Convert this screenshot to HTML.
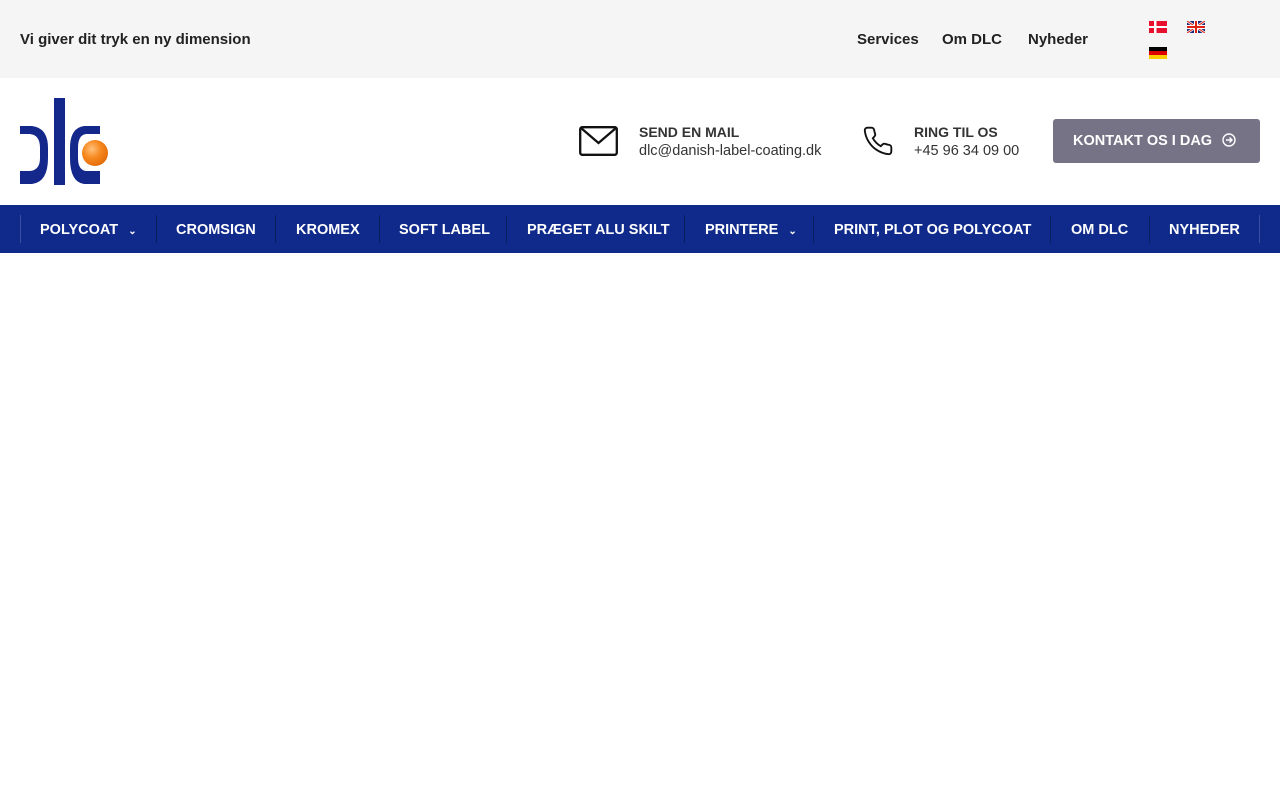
<!DOCTYPE html>
<html><head><meta charset="utf-8"><style>
*{margin:0;padding:0;box-sizing:border-box}
body{width:1280px;height:800px;background:#fff;font-family:"Liberation Sans",sans-serif;color:#222;position:relative;overflow:hidden}
.top{position:absolute;left:0;top:0;width:1280px;height:78px;background:#f5f5f5}
.top .tag{position:absolute;left:20px;top:31px;font-size:15px;font-weight:bold;color:#222}
.top .l{position:absolute;top:31px;font-size:15px;font-weight:bold;color:#222}
.lbl{position:absolute;font-size:14px;font-weight:bold;color:#333}
.val{position:absolute;font-size:14.5px;color:#333}
.btn{position:absolute;left:1053px;top:119px;width:207px;height:44px;background:#767386;border-radius:3px;color:#fff;font-weight:bold;font-size:14.5px;line-height:44px;padding-left:20px}
.nav{position:absolute;top:205px;left:0;width:1280px;height:48px;background:#0f2a8a}
.nav span{position:absolute;top:1px;line-height:48px;color:#fff;font-weight:bold;font-size:14.5px}
.nav i{position:absolute;top:10px;width:1px;height:28px;background:#0a1d5c}
</style></head><body>
<div class="top">
<div class="tag">Vi giver dit tryk en ny dimension</div>
<div class="l" style="left:857px">Services</div>
<div class="l" style="left:942px">Om DLC</div>
<div class="l" style="left:1028px">Nyheder</div>
<svg style="position:absolute;left:1149px;top:21px" width="18" height="12"><rect width="18" height="12" fill="#e8112d"/><rect x="5" width="2.5" height="12" fill="#fff"/><rect y="5" width="18" height="2" fill="#fff"/></svg>
<svg style="position:absolute;left:1187px;top:21px" width="18" height="12"><rect width="18" height="12" fill="#1f2a7a"/><path d="M0 0L18 12M18 0L0 12" stroke="#fff" stroke-width="2.5"/><path d="M0 0L18 12M18 0L0 12" stroke="#d21" stroke-width="1"/><rect x="7" width="4" height="12" fill="#fff"/><rect y="4" width="18" height="4" fill="#fff"/><rect x="8" width="2" height="12" fill="#d21"/><rect y="5" width="18" height="2" fill="#d21"/></svg>
<svg style="position:absolute;left:1149px;top:47px" width="18" height="12"><rect width="18" height="4" fill="#000"/><rect y="4" width="18" height="4" fill="#d00"/><rect y="8" width="18" height="4" fill="#fc0"/></svg>
</div>
<svg style="position:absolute;left:0;top:0" width="120" height="200" viewBox="0 0 120 200">
<defs><radialGradient id="g" cx="0.38" cy="0.35" r="0.7"><stop offset="0" stop-color="#ffc07a"/><stop offset="0.5" stop-color="#f7891f"/><stop offset="1" stop-color="#e26a08"/></radialGradient></defs>
<path d="M20 126 H32 Q48 128 48 148 V158 Q48 182 32 184 H20 V171 H30 Q40 170 40 158 V148 Q40 135 30 134 H20Z" fill="#13288a"/>
<rect x="54" y="98" width="11" height="87" fill="#13288a"/>
<path d="M100 126 H84 Q70 128 70 148 V158 Q70 182 84 184 H100 V171 H86 Q78 170 78 158 V148 Q78 135 86 134 H100Z" fill="#13288a"/>
<circle cx="95" cy="153" r="13" fill="url(#g)"/>
</svg>
<svg style="position:absolute;left:579px;top:126px" width="39" height="30" viewBox="0 0 39 30"><rect x="1.2" y="1.2" width="36.6" height="27.6" rx="2" fill="none" stroke="#111" stroke-width="2.3"/><path d="M2 2L19.5 17L37 2" fill="none" stroke="#111" stroke-width="2.3"/></svg>
<div class="lbl" style="left:639px;top:124px">SEND EN MAIL</div>
<div class="val" style="left:639px;top:143px">dlc@danish-label-coating.dk</div>
<svg style="position:absolute;left:862px;top:125px" width="32" height="32" viewBox="0 0 24 24"><path d="M22 16.9v3a2 2 0 0 1-2.2 2 19.8 19.8 0 0 1-8.6-3.1 19.5 19.5 0 0 1-6-6A19.8 19.8 0 0 1 2.1 4.2 2 2 0 0 1 4.1 2h3a2 2 0 0 1 2 1.7c.1 1 .4 1.9.7 2.8a2 2 0 0 1-.5 2.1L8.1 9.9a16 16 0 0 0 6 6l1.3-1.3a2 2 0 0 1 2.1-.4c.9.3 1.8.6 2.8.7a2 2 0 0 1 1.7 2z" fill="none" stroke="#111" stroke-width="1.4"/></svg>
<div class="lbl" style="left:914px;top:124px">RING TIL OS</div>
<div class="val" style="left:914px;top:143px">+45 96 34 09 00</div>
<div class="btn">KONTAKT OS I DAG <svg style="vertical-align:-2px;margin-left:6px" width="14" height="14" viewBox="0 0 14 14"><circle cx="7" cy="7" r="6" fill="none" stroke="#fff" stroke-width="1.4"/><path d="M4 7H10M7.5 4.5L10 7L7.5 9.5" fill="none" stroke="#fff" stroke-width="1.4"/></svg></div>
<div class="nav">
<i style="left:20px;background:#3a4f9e"></i>
<span style="left:40px">POLYCOAT <small style="font-size:10px;margin-left:6px">&#8964;</small></span>
<i style="left:156px"></i>
<span style="left:176px">CROMSIGN</span>
<i style="left:275px"></i>
<span style="left:296px">KROMEX</span>
<i style="left:379px"></i>
<span style="left:399px">SOFT LABEL</span>
<i style="left:506px"></i>
<span style="left:527px">PRÆGET ALU SKILT</span>
<i style="left:684px"></i>
<span style="left:705px">PRINTERE <small style="font-size:10px;margin-left:6px">&#8964;</small></span>
<i style="left:813px"></i>
<span style="left:834px">PRINT, PLOT OG POLYCOAT</span>
<i style="left:1050px"></i>
<span style="left:1071px">OM DLC</span>
<i style="left:1149px"></i>
<span style="left:1169px">NYHEDER</span>
<i style="left:1259px;background:#3a4f9e"></i>
</div>
</body></html>
